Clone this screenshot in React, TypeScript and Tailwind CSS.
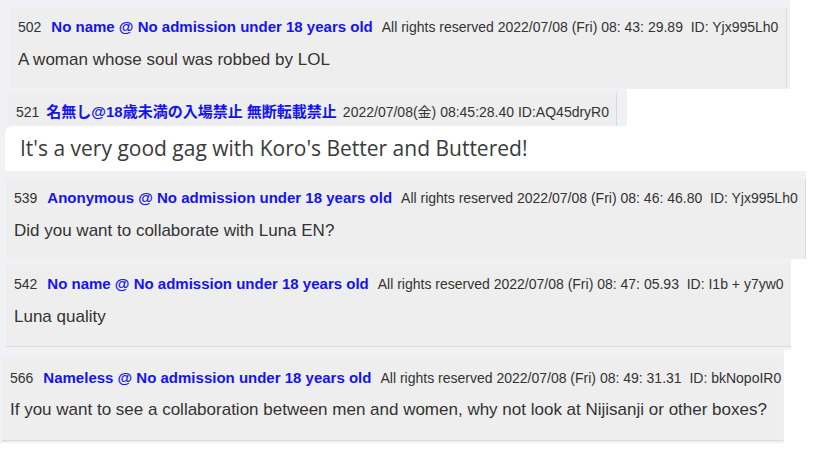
const posts = [
  {
    no: "502",
    name: "No name @ No admission under 18 years old",
    meta: "All rights reserved 2022/07/08 (Fri) 08: 43: 29.89  ID: Yjx995Lh0",
    body: "A woman whose soul was robbed by LOL",
  },
  {
    no: "539",
    name: "Anonymous @ No admission under 18 years old",
    meta: "All rights reserved 2022/07/08 (Fri) 08: 46: 46.80  ID: Yjx995Lh0",
    body: "Did you want to collaborate with Luna EN?",
  },
  {
    no: "542",
    name: "No name @ No admission under 18 years old",
    meta: "All rights reserved 2022/07/08 (Fri) 08: 47: 05.93  ID: I1b + y7yw0",
    body: "Luna quality",
  },
  {
    no: "566",
    name: "Nameless @ No admission under 18 years old",
    meta: "All rights reserved 2022/07/08 (Fri) 08: 49: 31.31  ID: bkNopoIR0",
    body: "If you want to see a collaboration between men and women, why not look at Nijisanji or other boxes?",
  },
];

type Post = (typeof posts)[number];

const Head = ({ p }: { p: Post }) => (
  <div className="flex h-[18px] items-center whitespace-pre text-[14px] leading-[18px] text-[#333]">
    <span>{p.no}</span>
    <span className="ml-[10px] text-[15px] font-bold text-[#1414ee]">{p.name}</span>
    <span className="ml-[9px]">{p.meta}</span>
  </div>
);

const Body = ({ text }: { text: string }) => (
  <div className="mt-[12px] text-[17px] leading-[24px] text-[#333]">{text}</div>
);

export default function App() {
  return (
    <div className="flex h-[451px] w-[816px] flex-col overflow-hidden bg-white font-['Liberation_Sans',Arial,sans-serif]">
      {/* 502 */}
      <div className="h-[89px] w-[790px] bg-[#f0f1f5] pl-[10px] pr-[3px] pt-[8px]">
        <div className="h-[80px] border-r border-[#dadada] bg-[#eeeeee] pl-[8px] pt-[10px]">
          <Head p={posts[0]} />
          <Body text={posts[0].body} />
        </div>
      </div>

      {/* 521 */}
      <div className="h-[37px] w-[627px] bg-[#f0f1f5] pl-[8px] pr-[10px] pt-[4px]">
        <div className="h-[33px] border-r border-[#dadada] bg-[#eeeeee] pl-[8px] pt-[10px]">
          <div className="flex h-[18px] items-center whitespace-pre text-[14px] leading-[18px] text-[#333]">
            <span>521</span>
            <span className="ml-[7px] font-['Liberation_Sans','Noto_Sans_CJK_JP',sans-serif] text-[15px] font-bold text-[#1414ee]">
              名無し@18歳未満の入場禁止 無断転載禁止
            </span>
            <span className="ml-[6px] font-['Liberation_Sans','Noto_Sans_CJK_JP',sans-serif]">
              2022/07/08(金) 08:45:28.40 ID:AQ45dryR0
            </span>
          </div>
        </div>
      </div>
      <div className="flex h-[45px] bg-[#f0f1f5] pl-[5px]">
        <div className="flex flex-1 items-center rounded-tl-[8px] bg-white pl-[15px] font-['Open_Sans',sans-serif] text-[21px] text-[#3a3a3a]">
          It's a very good gag with Koro's Better and Buttered!
        </div>
      </div>

      {/* 539 */}
      <div className="h-[88px] w-[806px] bg-[#f0f1f5] pl-[6px] pt-[8px]">
        <div className="h-[80px] border-r border-[#dadada] bg-[#eeeeee] pl-[8px] pt-[10px]">
          <Head p={posts[1]} />
          <Body text={posts[1].body} />
        </div>
      </div>

      {/* 542 */}
      <div className="h-[91px] w-[791px] bg-[#f0f1f5] pl-[6px] pt-[6px]">
        <div className="h-[82px] border-b border-[#dadada] bg-[#eeeeee] pl-[8px] pt-[10px]">
          <Head p={posts[2]} />
          <Body text={posts[2].body} />
        </div>
      </div>

      {/* 566 */}
      <div className="h-[93px] w-[784px] bg-[#f0f1f5] pl-[2px] pr-[1px] pt-[8px]">
        <div className="h-[83px] border-b border-[#dadada] bg-[#eeeeee] pl-[8px] pt-[11px]">
          <Head p={posts[3]} />
          <div className="mt-[11px] text-[17px] leading-[24px] text-[#333]">{posts[3].body}</div>
        </div>
      </div>
    </div>
  );
}
